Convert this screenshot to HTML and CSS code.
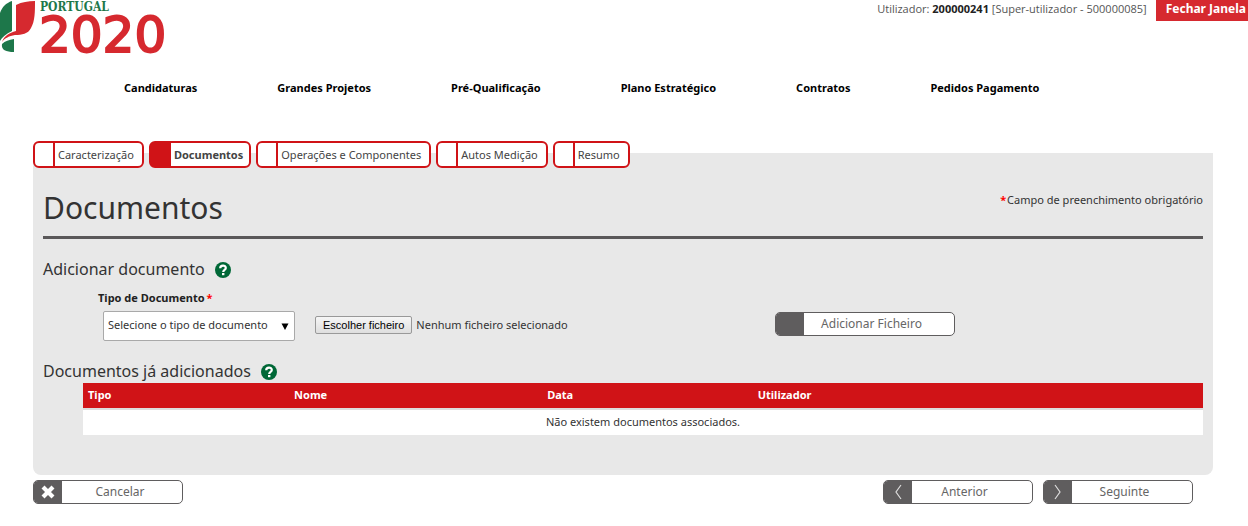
FILE: index.html
```html
<!DOCTYPE html>
<html lang="pt">
<head>
<meta charset="utf-8">
<title>Portugal 2020 - Documentos</title>
<link rel="stylesheet" href="styles.css">
</head>
<body>
<header class="top">
  <div class="logo">
    <svg class="logo-mark" width="36" height="53" viewBox="0 0 36 53" aria-hidden="true">
      <path fill="#1d774a" d="M12 1V31C6 34 2 37 0 41V13C2 7 6 3 12 1Z"/>
      <path fill="#d6292f" d="M16 5C22 2 28 1 35 1C35 12 35 21 31 28C28 34 22 35 15 35C9 36 5 38 2 42C4 36 9 33 16 31Z"/>
      <path fill="#1d774a" d="M2 44C5 41 9 40 14 39V52C6 52 1 50 2 44Z"/>
    </svg>
    <div class="logo-text">
      <span class="logo-name">PORTUGAL</span>
      <span class="logo-year">2020</span>
    </div>
  </div>
  <div class="session">
    <p class="user">Utilizador: <strong>200000241</strong> [Super-utilizador - 500000085]</p>
    <button class="close" type="button">Fechar Janela</button>
  </div>
</header>

<nav class="menu">
  <a href="#">Candidaturas</a>
  <a href="#">Grandes Projetos</a>
  <a href="#">Pré-Qualificação</a>
  <a href="#">Plano Estratégico</a>
  <a href="#">Contratos</a>
  <a href="#">Pedidos Pagamento</a>
</nav>

<main class="page">
  <nav class="tabs">
    <a class="tab" href="#">Caracterização</a>
    <a class="tab tab-active" href="#">Documentos</a>
    <a class="tab" href="#">Operações e Componentes</a>
    <a class="tab" href="#">Autos Medição</a>
    <a class="tab" href="#">Resumo</a>
  </nav>

  <section class="panel">
    <div class="title-row">
      <h1>Documentos</h1>
      <p class="note"><span class="req">*</span>Campo de preenchimento obrigatório</p>
    </div>

    <h2>Adicionar documento
      <svg class="help" width="16" height="16" viewBox="0 0 16 16" aria-hidden="true"><circle cx="8" cy="8" r="8" fill="#006837"/><path d="M5.2 6.2C5.2 2.8 10.8 2.8 10.8 6C10.8 8 8.2 7.8 8.2 10" fill="none" stroke="#fff" stroke-width="2.2"/><rect x="7" y="11" width="2.4" height="2.2" fill="#fff"/></svg>
    </h2>
    <form class="upload">
      <div class="field">
        <label class="field-label" for="tipo">Tipo de Documento<span class="req">*</span></label>
        <div class="select-box">
          <select id="tipo"><option>Selecione o tipo de documento</option></select>
          <svg class="caret" width="8" height="7" viewBox="0 0 8 7" aria-hidden="true"><path d="M0.5 0.5H7.5L4 7Z"/></svg>
        </div>
      </div>
      <div class="file">
        <input class="file-input" id="ficheiro" type="file">
        <label class="file-button" for="ficheiro">Escolher ficheiro</label>
        <span>Nenhum ficheiro selecionado</span>
      </div>
      <button class="btn btn-wide" type="button"><span class="btn-icon"></span><span class="btn-text">Adicionar Ficheiro</span></button>
    </form>

    <h2>Documentos já adicionados
      <svg class="help" width="16" height="16" viewBox="0 0 16 16" aria-hidden="true"><circle cx="8" cy="8" r="8" fill="#006837"/><path d="M5.2 6.2C5.2 2.8 10.8 2.8 10.8 6C10.8 8 8.2 7.8 8.2 10" fill="none" stroke="#fff" stroke-width="2.2"/><rect x="7" y="11" width="2.4" height="2.2" fill="#fff"/></svg>
    </h2>
    <div class="table-box">
      <table class="docs">
        <thead><tr><th class="c-tipo">Tipo</th><th class="c-nome">Nome</th><th class="c-data">Data</th><th>Utilizador</th></tr></thead>
        <tbody><tr><td colspan="4">Não existem documentos associados.</td></tr></tbody>
      </table>
    </div>
  </section>

  <footer class="actions">
    <button class="btn" type="button"><span class="btn-icon"><svg width="14" height="14" viewBox="0 0 14 14" aria-hidden="true"><path d="M3.5 3.5L10.5 10.5M10.5 3.5L3.5 10.5" stroke="#fff" stroke-width="4.2" stroke-linecap="square"/></svg></span><span class="btn-text">Cancelar</span></button>
    <div class="steps">
      <button class="btn" type="button"><span class="btn-icon"><svg width="8" height="16" viewBox="0 0 8 16" aria-hidden="true"><path d="M7 1L2 8L7 15" fill="none" stroke="#ddd" stroke-width="1.2"/></svg></span><span class="btn-text">Anterior</span></button>
      <button class="btn" type="button"><span class="btn-icon"><svg width="8" height="16" viewBox="0 0 8 16" aria-hidden="true"><path d="M1 1L6 8L1 15" fill="none" stroke="#ddd" stroke-width="1.2"/></svg></span><span class="btn-text">Seguinte</span></button>
    </div>
  </footer>
</main>
</body>
</html>
```
FILE: styles.css
```css
* { box-sizing: border-box; }
body {
  margin: 0;
  background: #fff;
  color: #333;
  font: 11px/16px "Noto Sans", "Open Sans", sans-serif;
}
h1, h2, p { margin: 0; font-weight: normal; }
a { color: inherit; text-decoration: none; }
button, select { font: inherit; color: inherit; }

.top { display: flex; justify-content: space-between; align-items: flex-start; height: 56px; }
.logo { display: flex; gap: 3px; }
.logo-text { display: flex; flex-direction: column; }
.logo-name {
  height: 13px;
  padding-left: 1px;
  color: #1d774a;
  font: bold 12px/14px "DejaVu Serif Condensed", "DejaVu Serif", serif;
}
.logo-year {
  color: #d6292f;
  font: 50px/44px "DejaVu Sans", sans-serif;
  -webkit-text-stroke: 2px #d6292f;
}
.session { display: flex; }
.user { padding: 1px 9px 0 0; color: #555; font-family: "Open Sans", sans-serif; }
.user strong { color: #222; }
.close {
  height: 21px;
  padding: 0 2px 3px 10px;
  border: 0;
  background: #d6292f;
  color: #fff;
  font: bold 12px/18px "Noto Sans", sans-serif;
}

.menu {
  display: flex;
  gap: 80px;
  padding: 24px 0 0 124px;
  color: #000;
  font-weight: bold;
  white-space: nowrap;
}

.page { padding: 45px 35px 0 33px; }
.tabs { position: relative; display: flex; gap: 5px; }
.tab {
  display: flex;
  align-items: center;
  height: 27px;
  padding: 0 8px 2px 0;
  padding-bottom: 0;
  border: 2px solid #d01317;
  border-radius: 6px;
  background: #fff;
  color: #444;
  line-height: 14px;
}
.tab::before {
  content: "";
  box-sizing: border-box;
  align-self: stretch;
  width: 20px;
  margin-right: 3px;
  border-right: 2px solid #d01317;
}
.tab-active { padding-right: 6px; font-weight: bold; }
.tab-active::before { background: #d01317; }

.panel {
  margin-top: -15px;
  padding: 38px 10px 40px;
  border-radius: 0 0 8px 8px;
  background: #e8e8e8;
}
.title-row {
  display: flex;
  justify-content: space-between;
  height: 48px;
  border-bottom: 3px solid #5a5859;
}
h1 { font-size: 30px; line-height: 34px; }
.note { padding-top: 1px; }
.req { margin: 0 1px 0 2px; color: #f00; font-weight: bold; }
h2 {
  display: flex;
  align-items: center;
  gap: 10px;
  font-size: 16px;
  line-height: 24px;
  padding-top: 18px;
}
.help { margin-top: 2px; }

.upload { display: flex; align-items: flex-start; height: 60px; }
.field { padding: 9px 0 0 55px; }
.field-label { display: block; color: #222; font-weight: bold; }
.select-box { position: relative; width: 192px; margin: 5px 0 0 5px; }
.select-box select {
  display: block;
  width: 100%;
  height: 30px;
  padding: 0 20px 2px 4px;
  border: 1px solid #a9a9a9;
  border-radius: 2px;
  background: #fff;
  appearance: none;
}
.caret { position: absolute; right: 6px; top: 12px; pointer-events: none; }
.file { display: flex; align-items: center; gap: 4px; width: 480px; padding: 35px 0 0 20px; }
.file-input { position: absolute; width: 1px; height: 1px; opacity: 0; }
.file-button {
  padding: 0 7px;
  border: 1px solid #999;
  border-radius: 2px;
  background: linear-gradient(#f6f6f6, #dedede);
  color: #000;
  font-family: "Liberation Sans", Arial, sans-serif;
}

.btn {
  display: flex;
  width: 150px;
  height: 24px;
  padding: 0;
  overflow: hidden;
  border: 1px solid #5f5d5e;
  border-radius: 5px;
  background: #fff;
  color: #666;
  font-size: 12px;
}
.btn-wide { width: 180px; margin-top: 31px; }
.btn-icon {
  display: flex;
  align-items: center;
  justify-content: center;
  align-self: stretch;
  width: 28px;
  background: #5f5d5e;
}
.btn-text { flex: 1; align-self: center; padding-right: 15px; }
.actions > .btn .btn-text { padding-right: 4px; }

.table-box { padding-left: 40px; }
.docs { width: 100%; border-collapse: collapse; table-layout: fixed; background: #fff; }
.docs th {
  height: 26px;
  padding: 0 5px 2px;
  background: #d01317;
  color: #fff;
  text-align: left;
}
.docs thead { border-bottom: 2px solid #ddd; }
.docs td { height: 26px; padding: 0 0 2px; text-align: center; }
.c-tipo { width: 18.4%; }
.c-nome { width: 22.6%; }
.c-data { width: 18.8%; }

.actions { display: flex; justify-content: space-between; padding: 5px 20px 0 0; }
.steps { display: flex; gap: 10px; }
```
